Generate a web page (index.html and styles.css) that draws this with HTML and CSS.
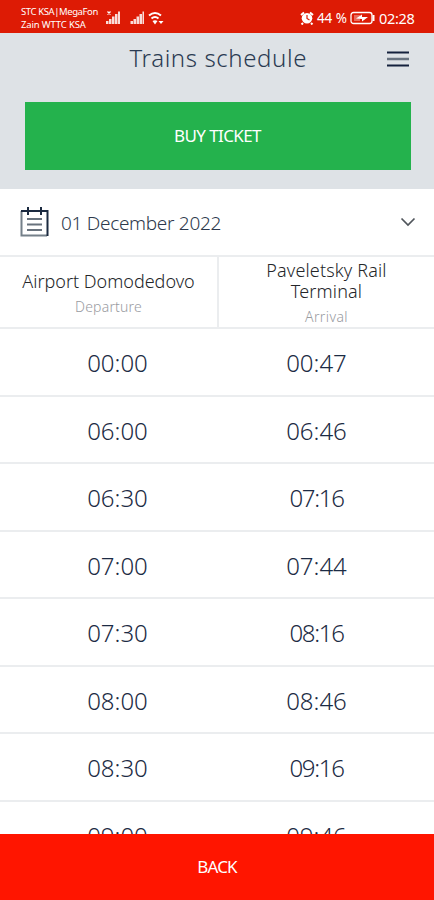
FILE: index.html
```html
<!DOCTYPE html>
<html lang="en">
<head>
<meta charset="utf-8">
<title>Trains schedule</title>
<link rel="stylesheet" href="styles.css">
</head>
<body>
<div class="app">
  <div class="status">
    <div class="carrier"><span class="c1">STC KSA|MegaFon</span><span class="c2">Zain WTTC KSA</span></div>
    <svg class="signals" width="60" height="18" viewBox="0 0 60 18" fill="#fff">
      <path d="M2 12h2.500v3H2zM5 10h2.500v5H5zM8 7.500h2.500v7.500H8zM11 5h2.500v10H11zM14 2.500h2V15h-2z" opacity=".85"/>
      <path d="M3.500 2.500l3 3M6.500 2.500l-3 3" stroke="#fff" stroke-width="1.300"/>
      <path d="M26.500 12H29v3h-2.500zM29.500 10H32v5h-2.500zM32.500 7.500H35v7.500h-2.500zM35.500 5H38v10h-2.500zM38.500 2.500h1.500V15h-1.500z" opacity=".85"/>
      <g fill="none" stroke="#fff" stroke-width="2"><path d="M45 6.500q6-5 12 0M47.500 9.500q3.500-3 7 0"/></g>
      <path d="M48.500 12q2.500-1.500 5 0l-2.500 3.500zM54.500 12h5L57 15z"/>
    </svg>
    <svg class="alarm" width="14" height="14" viewBox="0 0 14 14"><path d="M1 4l3-2.500M13 4l-3-2.500M3 12l-1.500 1.500M11 12l1.500 1.500" stroke="#fff" stroke-width="2"/><circle cx="7" cy="7.300" r="5.300" fill="#fff"/><path d="M7 4v3.500l2.500 1.500" fill="none" stroke="#dd1b05" stroke-width="1.200"/></svg>
    <span class="pct">44 %</span>
    <svg class="battery" width="26" height="14" viewBox="0 0 26 14"><rect x="1" y="1.500" width="21" height="11" rx="2.500" fill="none" stroke="#fff" stroke-width="1.300"/><path d="M23.500 4v6" stroke="#fff" stroke-width="2"/><path d="M4 4h6v6H4z" fill="#fff" opacity=".35"/><path d="M6 7.500l6-4V6h6l-6 4.500V8z" fill="#fff"/></svg>
    <span class="clock">02:28</span>
  </div>
  <header class="top">
    <div class="bar">
      <h1 class="title">Trains schedule</h1>
      <svg class="menu" width="22" height="16" viewBox="0 0 22 16"><path d="M0 1.500h22M0 14.500h22" stroke="#14213d" stroke-width="2"/><path d="M0 8h22" stroke="#687380" stroke-width="2.500"/></svg>
    </div>
    <button class="buy"><span>BUY TICKET</span></button>
  </header>
  <div class="date">
    <svg width="30" height="32" viewBox="0 0 30 32" fill="none"><path d="M1.500 5v24.500H27" stroke="#75808a" stroke-width="2"/><path d="M1 5h26.500v25" stroke="#1b2a40" stroke-width="2"/><path d="M8 1v8M21 1v8" stroke="#1b2a40" stroke-width="2"/><path d="M7 13h15M7 18.500h15M7 24h15" stroke="#68727d" stroke-width="2"/></svg>
    <span class="day">01 December 2022</span>
    <svg class="chev" width="16" height="10" viewBox="0 0 16 10"><path d="M1.500 1.500L8 8l6.500-6.500" fill="none" stroke="#50555b" stroke-width="1.700"/></svg>
  </div>
  <div class="stations">
    <div class="station"><div class="name">Airport Domodedovo</div><div class="kind dep">Departure</div></div>
    <div class="station right"><div class="name to">Paveletsky Rail<br>Terminal</div><div class="kind arr">Arrival</div></div>
  </div>
  <main class="times">
    <div class="row"><span>00:00</span><span>00:47</span></div>
    <div class="row"><span>06:00</span><span>06:46</span></div>
    <div class="row"><span>06:30</span><span class="slim">07:16</span></div>
    <div class="row"><span>07:00</span><span>07:44</span></div>
    <div class="row"><span>07:30</span><span class="slim">08:16</span></div>
    <div class="row"><span>08:00</span><span>08:46</span></div>
    <div class="row"><span>08:30</span><span class="slim">09:16</span></div>
    <div class="row"><span>09:00</span><span>09:46</span></div>
  </main>
  <button class="back"><span>BACK</span></button>
</div>
</body>
</html>
```
FILE: styles.css
```css
* { box-sizing: border-box; }
body { margin: 0; font-family: "Noto Sans", "Open Sans", sans-serif; background: #fff; }
button { border: 0; padding: 0; font: inherit; color: #fff; }
svg { flex: none; display: block; }
span { white-space: nowrap; }
.app { height: 900px; display: flex; flex-direction: column; overflow: hidden; }
.status { height: 33px; flex: none; display: flex; align-items: center; background: #dd1b05; color: #fff; padding: 2px 19px 0 21px; }
.carrier { width: 83px; display: flex; flex-direction: column; font-size: 9.5px; line-height: 13px; }
.c1 { letter-spacing: -0.4px; }
.c2 { letter-spacing: -0.15px; }
.signals { margin-right: 136px; }
.alarm { margin-right: 3px; }
.pct { width: 33px; font-size: 13.500px; letter-spacing: -0.1px; }
.battery { margin-right: 3px; }
.clock { font-size: 14.500px; letter-spacing: -0.3px; }
.top { height: 156px; flex: none; background: #dee2e6; }
.bar { height: 69px; display: flex; justify-content: flex-end; padding: 8px 25px 0 0; }
.title { margin: 0 80px 0 0; font-size: 24px; line-height: 34px; font-weight: 300; letter-spacing: 0.6px; color: #2b3b52; }
.menu { margin-top: 10px; }
.buy { display: block; width: 386px; height: 68px; margin-left: 24.500px; padding-bottom: 2px; background: #24b24d; font-size: 17px; letter-spacing: -0.6px; }
.date { height: 68px; flex: none; display: flex; align-items: center; padding: 0 18px 0 20px; border-bottom: 2px solid #ebedef; }
.day { margin-left: 11px; padding-top: 1px; font-size: 19px; font-weight: 300; letter-spacing: -0.3px; color: #2d394c; }
.chev { margin-left: auto; }
.stations { height: 72px; flex: none; display: grid; grid-template-columns: 1fr 1fr; border-bottom: 2px solid #ebedef; text-align: center; }
.station { display: flex; flex-direction: column; justify-content: center; align-items: center; padding-top: 3px; }
.right { border-left: 2px solid #ebedef; }
.name { font-size: 18px; line-height: 21px; color: #242629; font-weight: 300; white-space: nowrap; }
.to { letter-spacing: 0.15px; }
.kind { margin-top: 5px; font-size: 14px; line-height: 20px; color: #999b9f; font-weight: 300; }
.dep { letter-spacing: 0.2px; }
.arr { letter-spacing: 0.4px; }
.times { flex: 1; min-height: 0; overflow: hidden; }
.row { height: 67.500px; display: grid; grid-template-columns: 1fr 1fr; align-items: center; padding: 2px 18px 0; text-align: center; border-bottom: 2px solid #ebedef; font-size: 24px; font-weight: 300; color: #1c2b44; }
.slim { letter-spacing: -1.3px; }
.back { height: 66.500px; flex: none; padding-bottom: 1px; background: #ff1500; font-size: 17px; letter-spacing: -0.8px; }
```
